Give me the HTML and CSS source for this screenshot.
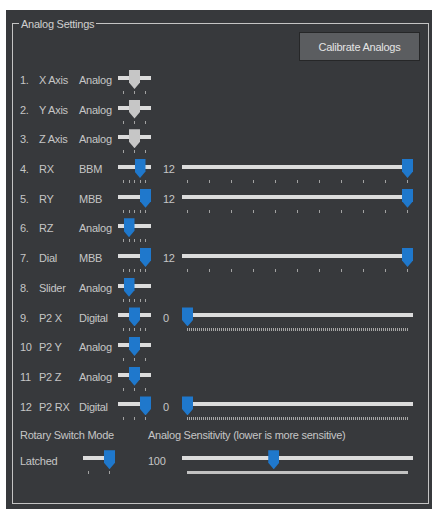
FILE: index.html
```html
<!DOCTYPE html>
<html>
<head>
<meta charset="utf-8">
<link rel="stylesheet" href="styles.css">
</head>
<body>
<div class="window">
  <div class="group">
    <span class="legend">Analog Settings</span>
    <div class="toolbar"><button class="btn">Calibrate Analogs</button></div>
    <div class="rows">
      <div class="row">
        <span>1.</span><span>X Axis</span><span>Analog</span>
        <div class="slider gray" style="--p:0.5"><div class="track"></div><div class="thumb"></div><div class="ticks"><i></i><i></i><i></i></div></div>
      </div>
      <div class="row">
        <span>2.</span><span>Y Axis</span><span>Analog</span>
        <div class="slider gray" style="--p:0.5"><div class="track"></div><div class="thumb"></div><div class="ticks"><i></i><i></i><i></i></div></div>
      </div>
      <div class="row">
        <span>3.</span><span>Z Axis</span><span>Analog</span>
        <div class="slider gray" style="--p:0.5"><div class="track"></div><div class="thumb"></div><div class="ticks"><i></i><i></i><i></i></div></div>
      </div>
      <div class="row">
        <span>4.</span><span>RX</span><span>BBM</span>
        <div class="slider" style="--p:0.75"><div class="track"></div><div class="thumb"></div><div class="ticks"><i></i><i></i><i></i><i></i><i></i></div></div>
        <span class="val">12</span>
        <div class="slider" style="--p:1"><div class="track"></div><div class="thumb"></div><div class="ticks"><i></i><i></i><i></i><i></i><i></i><i></i><i></i><i></i><i></i><i></i><i></i></div></div>
      </div>
      <div class="row">
        <span>5.</span><span>RY</span><span>MBB</span>
        <div class="slider" style="--p:1"><div class="track"></div><div class="thumb"></div><div class="ticks"><i></i><i></i><i></i><i></i><i></i></div></div>
        <span class="val">12</span>
        <div class="slider" style="--p:1"><div class="track"></div><div class="thumb"></div><div class="ticks"><i></i><i></i><i></i><i></i><i></i><i></i><i></i><i></i><i></i><i></i><i></i></div></div>
      </div>
      <div class="row">
        <span>6.</span><span>RZ</span><span>Analog</span>
        <div class="slider" style="--p:0.25"><div class="track"></div><div class="thumb"></div><div class="ticks"><i></i><i></i><i></i><i></i><i></i></div></div>
      </div>
      <div class="row">
        <span>7.</span><span>Dial</span><span>MBB</span>
        <div class="slider" style="--p:1"><div class="track"></div><div class="thumb"></div><div class="ticks"><i></i><i></i><i></i><i></i><i></i></div></div>
        <span class="val">12</span>
        <div class="slider" style="--p:1"><div class="track"></div><div class="thumb"></div><div class="ticks"><i></i><i></i><i></i><i></i><i></i><i></i><i></i><i></i><i></i><i></i><i></i></div></div>
      </div>
      <div class="row">
        <span>8.</span><span>Slider</span><span>Analog</span>
        <div class="slider" style="--p:0.25"><div class="track"></div><div class="thumb"></div><div class="ticks"><i></i><i></i><i></i><i></i><i></i></div></div>
      </div>
      <div class="row">
        <span>9.</span><span>P2 X</span><span>Digital</span>
        <div class="slider" style="--p:0.5"><div class="track"></div><div class="thumb"></div><div class="ticks"><i></i><i></i><i></i><i></i><i></i></div></div>
        <span class="val">0</span>
        <div class="slider" style="--p:0"><div class="track"></div><div class="thumb"></div><div class="ticks dense"></div></div>
      </div>
      <div class="row">
        <span>10</span><span>P2 Y</span><span>Analog</span>
        <div class="slider" style="--p:0.5"><div class="track"></div><div class="thumb"></div><div class="ticks"><i></i><i></i><i></i></div></div>
      </div>
      <div class="row">
        <span>11</span><span>P2 Z</span><span>Analog</span>
        <div class="slider" style="--p:0.5"><div class="track"></div><div class="thumb"></div><div class="ticks"><i></i><i></i><i></i></div></div>
      </div>
      <div class="row">
        <span>12</span><span>P2 RX</span><span>Digital</span>
        <div class="slider" style="--p:1"><div class="track"></div><div class="thumb"></div><div class="ticks"><i></i><i></i><i></i></div></div>
        <span class="val">0</span>
        <div class="slider" style="--p:0"><div class="track"></div><div class="thumb"></div><div class="ticks dense"></div></div>
      </div>
    </div>
    <div class="bottom">
      <span class="lbl-rotary">Rotary Switch Mode</span>
      <span class="lbl-sens">Analog Sensitivity (lower is more sensitive)</span>
      <span class="latched">Latched</span>
      <div class="slider" style="--p:1"><div class="track"></div><div class="thumb"></div><div class="ticks"><i></i><i></i></div></div>
      <span class="val100">100</span>
      <div class="slider" style="--p:0.392"><div class="track"></div><div class="thumb"></div><div class="ticks solid"></div></div>
    </div>
  </div>
</div>
</body>
</html>
```

FILE: styles.css
```css
html, body {
  margin: 0;
  padding: 0;
  background: #ffffff;
}

body {
  font-family: "Liberation Sans", Arial, sans-serif;
  font-size: 11px;
  letter-spacing: -0.25px;
  color: #c6c6c6;
}

.window {
  margin: 10px 0 0 6px;
  width: 426px;
  height: 499px;
  box-sizing: border-box;
  padding: 13px 3px 0 6px;
  background: #37393c;
}

.group {
  position: relative;
  height: 481px;
  box-sizing: border-box;
  border: 1px solid #c4c4c4;
}

.legend {
  position: absolute;
  top: -7px;
  left: 6px;
  padding: 0 2px;
  line-height: 14px;
  background: #37393c;
  color: #cfcfcf;
}

.toolbar {
  display: flex;
  justify-content: flex-end;
  padding: 8px 8px 0 0;
}

.btn {
  width: 121px;
  height: 29px;
  margin: 0;
  padding: 0;
  border: 1px solid #262728;
  background: #5b5d60;
  color: #e4e4e4;
  font-family: "Liberation Sans", Arial, sans-serif;
  font-size: 11px;
  letter-spacing: -0.25px;
}

.rows {
  margin-top: 5px;
  padding-left: 7px;
}

.row {
  display: grid;
  grid-template-columns: 19px 40px 39px 33px 12px 19px 231px;
  height: 29.7px;
  line-height: 29.7px;
  white-space: nowrap;
}

.row .val {
  grid-column: 6;
}

.slider {
  position: relative;
  margin-top: 3.9px;
  padding-top: 6px;
  height: 18px;
  line-height: 0;
}

.track {
  height: 4px;
  background: #dcdcdc;
}

.thumb {
  position: absolute;
  top: 0;
  left: calc(var(--p) * (100% - 11px));
  width: 11px;
  height: 19px;
  background: #1f78cc;
  clip-path: polygon(0 0, 100% 0, 100% 66%, 50% 100%, 0 66%);
}

.gray .thumb {
  background: #c6c6c6;
}

.ticks {
  display: flex;
  justify-content: space-between;
  height: 3px;
  margin: 11px 5px 0 5px;
}

.ticks i {
  display: block;
  width: 1px;
  height: 3px;
  background: #a2a2a2;
}

.ticks.dense {
  background: repeating-linear-gradient(to right, #a6a6a6 0 1px, transparent 1px 2px);
}

.ticks.solid {
  background: #c2c2c2;
}

.bottom {
  display: grid;
  grid-template-columns: 63px 32px 33px 34px 231px;
  grid-template-rows: 27px 24px;
  padding-left: 7px;
  white-space: nowrap;
}

.lbl-rotary {
  grid-column: 1 / 4;
  line-height: 27px;
}

.lbl-sens {
  grid-column: 4 / 6;
  line-height: 27px;
}

.latched {
  grid-column: 1;
  line-height: 24px;
}

.val100 {
  grid-column: 4;
  line-height: 24px;
}

.bottom .slider {
  margin-top: 1px;
}
```
